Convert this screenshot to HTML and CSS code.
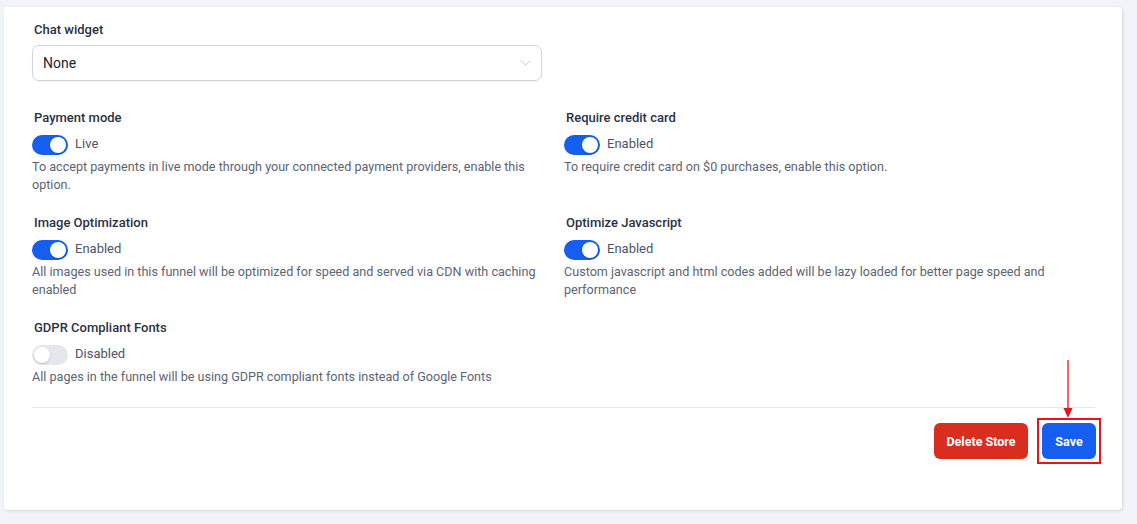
FILE: index.html
```html
<!DOCTYPE html>
<html>
<head>
<meta charset="utf-8">
<link rel="stylesheet" href="styles.css">
</head>
<body>
<div class="card">
  <div class="field chat">
    <div class="label">Chat widget</div>
    <div class="select">
      <span>None</span>
      <svg class="chev" width="11" height="6" viewBox="0 0 11 6"><path d="M0.5 0.5 L5.5 5 L10.5 0.5" fill="none" stroke="#c4c8d0" stroke-width="1"/></svg>
    </div>
  </div>

  <div class="grid">
    <div class="opt">
      <div class="label">Payment mode</div>
      <div class="tgl-row"><span class="tgl on"></span><span class="tgl-text">Live</span></div>
      <div class="desc">To accept payments in live mode through your connected payment providers, enable this option.</div>
    </div>
    <div class="opt">
      <div class="label">Require credit card</div>
      <div class="tgl-row"><span class="tgl on"></span><span class="tgl-text">Enabled</span></div>
      <div class="desc">To require credit card on $0 purchases, enable this option.</div>
    </div>
    <div class="opt">
      <div class="label">Image Optimization</div>
      <div class="tgl-row"><span class="tgl on"></span><span class="tgl-text">Enabled</span></div>
      <div class="desc">All images used in this funnel will be optimized for speed and served via CDN with caching enabled</div>
    </div>
    <div class="opt">
      <div class="label">Optimize Javascript</div>
      <div class="tgl-row"><span class="tgl on"></span><span class="tgl-text">Enabled</span></div>
      <div class="desc">Custom javascript and html codes added will be lazy loaded for better page speed and performance</div>
    </div>
    <div class="opt">
      <div class="label">GDPR Compliant Fonts</div>
      <div class="tgl-row"><span class="tgl"></span><span class="tgl-text">Disabled</span></div>
      <div class="desc">All pages in the funnel will be using GDPR compliant fonts instead of Google Fonts</div>
    </div>
  </div>

  <div class="divider"></div>

  <div class="actions">
    <button class="btn danger">Delete Store</button>
    <div class="highlight">
      <button class="btn primary">Save</button>
      <svg class="arrow" width="12" height="60" viewBox="0 0 12 60"><line x1="6" y1="0" x2="6" y2="50" stroke="#e8141b" stroke-width="1.3"/><path d="M1.5 48 L10.5 48 L6 58 Z" fill="#e8141b"/></svg>
    </div>
  </div>
</div>
</body>
</html>
```
FILE: styles.css
```css
* { box-sizing: border-box; }
html, body { margin: 0; padding: 0; }
body {
  background: #f1f5f9;
  font-family: Roboto, "Liberation Sans", Arial, sans-serif;
  width: 1137px;
  height: 524px;
  overflow: hidden;
  padding: 7px 15px 0 4px;
}
.card {
  background: #fff;
  border-radius: 4px;
  box-shadow: 1px 1px 3px rgba(16, 24, 40, 0.14);
  height: 503px;
  padding: 13px 25px 0 28px;
}
.label {
  font-size: 13px;
  font-weight: 500;
  color: #2a3242;
  line-height: 20px;
  padding-left: 2px;
}
.chat { width: 510px; }
.chat .label { margin-bottom: 5px; }
.select {
  height: 36px;
  border: 1px solid #d0d5dd;
  border-radius: 7px;
  display: flex;
  align-items: center;
  justify-content: space-between;
  padding: 0 10px 0 10px;
  font-size: 14px;
  color: #1d2433;
  box-shadow: 0 1px 2px rgba(16,24,40,0.05);
}
.grid {
  margin-top: 27px;
  display: grid;
  grid-template-columns: 509px 509px;
  column-gap: 23px;
  row-gap: 19px;
  align-items: start;
}
.opt .label { margin-bottom: 7px; }
.tgl-row {
  display: flex;
  align-items: center;
  height: 20px;
  margin-bottom: 3px;
}
.tgl {
  width: 36px;
  height: 20px;
  border-radius: 10px;
  background: #e4e7ec;
  position: relative;
  flex: none;
}
.tgl::after {
  content: "";
  position: absolute;
  top: 2px;
  left: 2px;
  width: 16px;
  height: 16px;
  border-radius: 50%;
  background: #fff;
  box-shadow: 0 1px 2px rgba(16,24,40,0.2);
}
.tgl.on { background: #155eef; }
.tgl.on::after { left: 18px; }
.tgl-text {
  margin-left: 7px;
  font-size: 13px;
  color: #4d5565;
  position: relative;
  top: -2px;
}
.desc {
  font-size: 12.6px;
  line-height: 18px;
  color: #5c6473;
}
.divider {
  margin-top: 21px;
  height: 1px;
  background: #e4e7ec;
  width: 1063px;
}
.actions {
  margin-top: 10px;
  display: flex;
  justify-content: flex-end;
  align-items: center;
  width: 1069px;
}
.btn {
  font-family: Roboto, "Liberation Sans", Arial, sans-serif;
  font-size: 12.5px;
  font-weight: 700;
  color: #fff;
  border: none;
  border-radius: 6px;
  height: 36px;
  cursor: pointer;
}
.danger {
  background: #d92d20;
  width: 94px;
  margin-right: 9px;
}
.highlight {
  border: 2px solid #e8141b;
  padding: 3px;
  position: relative;
}
.primary {
  background: #155eef;
  width: 54px;
  display: block;
}
.arrow {
  position: absolute;
  left: 23px;
  top: -60px;
}
```
